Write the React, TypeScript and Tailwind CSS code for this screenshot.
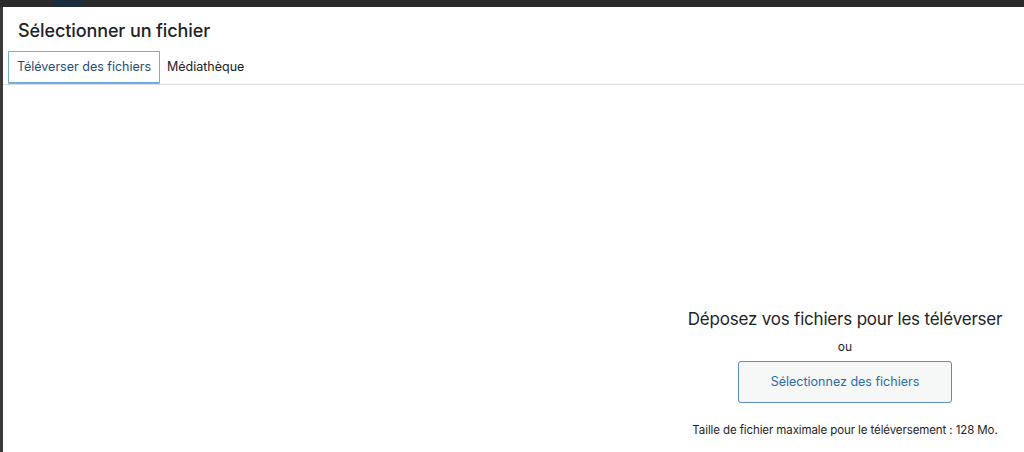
export default function App() {
  return (
    <div
      className="w-[1024px] h-[452px] overflow-hidden bg-[#2f2f2f] flex flex-col"
      style={{ fontFamily: "Inter, 'Noto Sans', sans-serif" }}
    >
      {/* Admin bar peeking behind the overlay */}
      <div className="h-[7px] shrink-0 flex items-stretch bg-[#2b2b2b]">
        <div className="w-[53px]" />
        <div className="w-[28px] bg-[#1b2c3f]" />
      </div>

      <div className="flex flex-1 min-h-0">
        <div className="w-[3px] bg-[#3a3a3a] shrink-0" />

        {/* Modal */}
        <div className="flex-1 bg-white flex flex-col text-[#1d2327] overflow-hidden">
          <h1 className="shrink-0 text-[18px] font-medium leading-none pl-[15px] pt-[15px] h-[44px] tracking-[-0.1px] whitespace-nowrap">
            Sélectionner un fichier
          </h1>

          {/* Tabs */}
          <div className="shrink-0 flex items-stretch h-[34px] border-b border-[#dcdcde] pl-[5px]">
            <div className="flex items-center justify-center text-[12.5px] text-[#1e4d75] border border-[#72aee6] border-b-[2px] rounded-[1px] w-[152px] whitespace-nowrap">
              Téléverser des fichiers
            </div>
            <div className="px-[7px] flex items-center text-[12.5px] text-[#1d2327] whitespace-nowrap">
              Médiathèque
            </div>
          </div>

          {/* Drop zone */}
          <div className="flex-1 flex">
            <div className="ml-[642px] w-[400px] shrink-0 pt-[226px] flex flex-col items-center whitespace-nowrap">
              <p className="text-[17px] leading-none tracking-[-0.2px]">
                Déposez vos fichiers pour les téléverser
              </p>
              <p className="text-[12px] leading-none mt-[13px]">ou</p>
              <button className="mt-[8px] w-[214px] h-[42px] rounded-[3px] border border-[#5a8cc6] bg-[#f6f7f7] text-[12.5px] text-[#2a6cad]">
                Sélectionnez des fichiers
              </button>
              <p className="text-[11.5px] leading-none mt-[22px] tracking-[-0.1px]">
                Taille de fichier maximale pour le téléversement : 128 Mo.
              </p>
            </div>
          </div>
        </div>
      </div>
    </div>
  );
}
